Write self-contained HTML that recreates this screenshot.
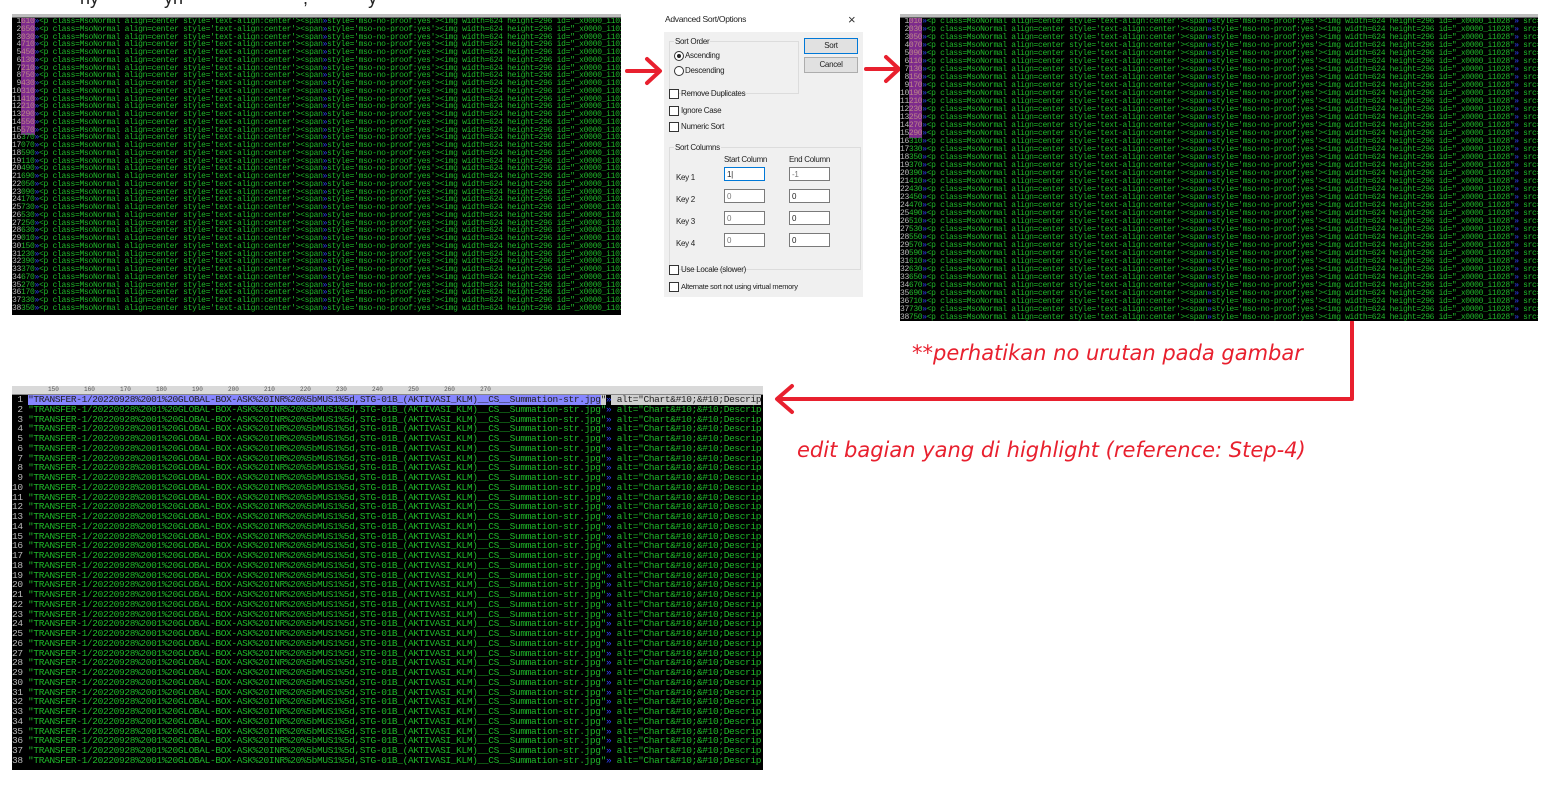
<!DOCTYPE html>
<html><head><meta charset="utf-8"><style>
body{margin:0;width:1562px;height:790px;background:#fff;position:relative;overflow:hidden;font-family:"Liberation Sans",sans-serif}
.p{position:absolute;background:#000;overflow:hidden;font-family:"Liberation Mono",monospace;white-space:pre;color:#1fb82a}
.p .r{height:3px;background:#bdbdbd;border-bottom:1px solid #666}
.p div.l{overflow:hidden}
.n{color:#bbb}
.h{background:#7d2a8c;color:#b88}
.bl{color:#3344ff}
#A{left:12px;top:14px;width:609px;height:301px;font-size:8px;line-height:7.75px;letter-spacing:-0.3px}
#B{left:900px;top:14px;width:638px;height:307px;font-size:8px;line-height:8px;letter-spacing:-0.35px}
#C{left:12px;top:386px;width:751px;height:384px;font-size:9.5px;line-height:9.75px;letter-spacing:-0.35px}
#C .r{height:8px;background:#d9d9d9;border-bottom:1px solid #888;font-size:6px;line-height:8px;color:#555;letter-spacing:0}
.hl{background:#8585ff;color:#222}
.dlg{position:absolute;left:664px;top:10px;width:199px;height:287px;background:#f0f0f0;font-size:8px;color:#222;letter-spacing:-0.3px}
.dlg .t{position:absolute;left:0;top:0;width:199px;height:22px;background:#fff}
.dlg div{position:absolute}
.box{border:1px solid #dcdcdc}
.cb{width:8px;height:8px;border:1px solid #333;background:#fff}
.in{width:41px;height:14px;border:1px solid #7a7a7a;background:#fff;font-size:8px;line-height:14px;padding-left:2px;box-sizing:border-box;color:#777}
.btn{width:52px;height:14px;border:1px solid #adadad;background:#e1e1e1;text-align:center;line-height:14px}
.hw{position:absolute;color:#e8202e;font-family:"DejaVu Sans",sans-serif;font-weight:300;font-style:italic}
</style></head><body>
<div style="position:absolute;left:80px;top:-12px;font-size:18px;color:#222;white-space:pre">ny             yn                        ,            y</div>

<div class="p" id="A"><div class="r"></div><div class="l"> <span class="n">1</span><span class="h">610</span><span class="bl">»</span>&lt;p class=MsoNormal align=center style='text-align:center'&gt;&lt;span<span class="bl">»</span>style='mso-no-proof:yes'&gt;&lt;img width=624 height=296 id="_x0000_i1028"<span class="bl">»</span> sr
 <span class="n">2</span><span class="h">650</span><span class="bl">»</span>&lt;p class=MsoNormal align=center style='text-align:center'&gt;&lt;span<span class="bl">»</span>style='mso-no-proof:yes'&gt;&lt;img width=624 height=296 id="_x0000_i1028"<span class="bl">»</span> sr
 <span class="n">3</span><span class="h">030</span><span class="bl">»</span>&lt;p class=MsoNormal align=center style='text-align:center'&gt;&lt;span<span class="bl">»</span>style='mso-no-proof:yes'&gt;&lt;img width=624 height=296 id="_x0000_i1028"<span class="bl">»</span> sr
 <span class="n">4</span><span class="h">710</span><span class="bl">»</span>&lt;p class=MsoNormal align=center style='text-align:center'&gt;&lt;span<span class="bl">»</span>style='mso-no-proof:yes'&gt;&lt;img width=624 height=296 id="_x0000_i1028"<span class="bl">»</span> sr
 <span class="n">5</span><span class="h">450</span><span class="bl">»</span>&lt;p class=MsoNormal align=center style='text-align:center'&gt;&lt;span<span class="bl">»</span>style='mso-no-proof:yes'&gt;&lt;img width=624 height=296 id="_x0000_i1028"<span class="bl">»</span> sr
 <span class="n">6</span><span class="h">130</span><span class="bl">»</span>&lt;p class=MsoNormal align=center style='text-align:center'&gt;&lt;span<span class="bl">»</span>style='mso-no-proof:yes'&gt;&lt;img width=624 height=296 id="_x0000_i1028"<span class="bl">»</span> sr
 <span class="n">7</span><span class="h">210</span><span class="bl">»</span>&lt;p class=MsoNormal align=center style='text-align:center'&gt;&lt;span<span class="bl">»</span>style='mso-no-proof:yes'&gt;&lt;img width=624 height=296 id="_x0000_i1028"<span class="bl">»</span> sr
 <span class="n">8</span><span class="h">750</span><span class="bl">»</span>&lt;p class=MsoNormal align=center style='text-align:center'&gt;&lt;span<span class="bl">»</span>style='mso-no-proof:yes'&gt;&lt;img width=624 height=296 id="_x0000_i1028"<span class="bl">»</span> sr
 <span class="n">9</span><span class="h">430</span><span class="bl">»</span>&lt;p class=MsoNormal align=center style='text-align:center'&gt;&lt;span<span class="bl">»</span>style='mso-no-proof:yes'&gt;&lt;img width=624 height=296 id="_x0000_i1028"<span class="bl">»</span> sr
<span class="n">10</span><span class="h">310</span><span class="bl">»</span>&lt;p class=MsoNormal align=center style='text-align:center'&gt;&lt;span<span class="bl">»</span>style='mso-no-proof:yes'&gt;&lt;img width=624 height=296 id="_x0000_i1028"<span class="bl">»</span> sr
<span class="n">11</span><span class="h">410</span><span class="bl">»</span>&lt;p class=MsoNormal align=center style='text-align:center'&gt;&lt;span<span class="bl">»</span>style='mso-no-proof:yes'&gt;&lt;img width=624 height=296 id="_x0000_i1028"<span class="bl">»</span> sr
<span class="n">12</span><span class="h">210</span><span class="bl">»</span>&lt;p class=MsoNormal align=center style='text-align:center'&gt;&lt;span<span class="bl">»</span>style='mso-no-proof:yes'&gt;&lt;img width=624 height=296 id="_x0000_i1028"<span class="bl">»</span> sr
<span class="n">13</span><span class="h">290</span><span class="bl">»</span>&lt;p class=MsoNormal align=center style='text-align:center'&gt;&lt;span<span class="bl">»</span>style='mso-no-proof:yes'&gt;&lt;img width=624 height=296 id="_x0000_i1028"<span class="bl">»</span> sr
<span class="n">14</span><span class="h">550</span><span class="bl">»</span>&lt;p class=MsoNormal align=center style='text-align:center'&gt;&lt;span<span class="bl">»</span>style='mso-no-proof:yes'&gt;&lt;img width=624 height=296 id="_x0000_i1028"<span class="bl">»</span> sr
<span class="n">15</span><span class="h">570</span><span class="bl">»</span>&lt;p class=MsoNormal align=center style='text-align:center'&gt;&lt;span<span class="bl">»</span>style='mso-no-proof:yes'&gt;&lt;img width=624 height=296 id="_x0000_i1028"<span class="bl">»</span> sr
<span class="n">16</span>370<span class="bl">»</span>&lt;p class=MsoNormal align=center style='text-align:center'&gt;&lt;span<span class="bl">»</span>style='mso-no-proof:yes'&gt;&lt;img width=624 height=296 id="_x0000_i1028"<span class="bl">»</span> sr
<span class="n">17</span>070<span class="bl">»</span>&lt;p class=MsoNormal align=center style='text-align:center'&gt;&lt;span<span class="bl">»</span>style='mso-no-proof:yes'&gt;&lt;img width=624 height=296 id="_x0000_i1028"<span class="bl">»</span> sr
<span class="n">18</span>590<span class="bl">»</span>&lt;p class=MsoNormal align=center style='text-align:center'&gt;&lt;span<span class="bl">»</span>style='mso-no-proof:yes'&gt;&lt;img width=624 height=296 id="_x0000_i1028"<span class="bl">»</span> sr
<span class="n">19</span>110<span class="bl">»</span>&lt;p class=MsoNormal align=center style='text-align:center'&gt;&lt;span<span class="bl">»</span>style='mso-no-proof:yes'&gt;&lt;img width=624 height=296 id="_x0000_i1028"<span class="bl">»</span> sr
<span class="n">20</span>490<span class="bl">»</span>&lt;p class=MsoNormal align=center style='text-align:center'&gt;&lt;span<span class="bl">»</span>style='mso-no-proof:yes'&gt;&lt;img width=624 height=296 id="_x0000_i1028"<span class="bl">»</span> sr
<span class="n">21</span>690<span class="bl">»</span>&lt;p class=MsoNormal align=center style='text-align:center'&gt;&lt;span<span class="bl">»</span>style='mso-no-proof:yes'&gt;&lt;img width=624 height=296 id="_x0000_i1028"<span class="bl">»</span> sr
<span class="n">22</span>050<span class="bl">»</span>&lt;p class=MsoNormal align=center style='text-align:center'&gt;&lt;span<span class="bl">»</span>style='mso-no-proof:yes'&gt;&lt;img width=624 height=296 id="_x0000_i1028"<span class="bl">»</span> sr
<span class="n">23</span>090<span class="bl">»</span>&lt;p class=MsoNormal align=center style='text-align:center'&gt;&lt;span<span class="bl">»</span>style='mso-no-proof:yes'&gt;&lt;img width=624 height=296 id="_x0000_i1028"<span class="bl">»</span> sr
<span class="n">24</span>170<span class="bl">»</span>&lt;p class=MsoNormal align=center style='text-align:center'&gt;&lt;span<span class="bl">»</span>style='mso-no-proof:yes'&gt;&lt;img width=624 height=296 id="_x0000_i1028"<span class="bl">»</span> sr
<span class="n">25</span>730<span class="bl">»</span>&lt;p class=MsoNormal align=center style='text-align:center'&gt;&lt;span<span class="bl">»</span>style='mso-no-proof:yes'&gt;&lt;img width=624 height=296 id="_x0000_i1028"<span class="bl">»</span> sr
<span class="n">26</span>530<span class="bl">»</span>&lt;p class=MsoNormal align=center style='text-align:center'&gt;&lt;span<span class="bl">»</span>style='mso-no-proof:yes'&gt;&lt;img width=624 height=296 id="_x0000_i1028"<span class="bl">»</span> sr
<span class="n">27</span>250<span class="bl">»</span>&lt;p class=MsoNormal align=center style='text-align:center'&gt;&lt;span<span class="bl">»</span>style='mso-no-proof:yes'&gt;&lt;img width=624 height=296 id="_x0000_i1028"<span class="bl">»</span> sr
<span class="n">28</span>630<span class="bl">»</span>&lt;p class=MsoNormal align=center style='text-align:center'&gt;&lt;span<span class="bl">»</span>style='mso-no-proof:yes'&gt;&lt;img width=624 height=296 id="_x0000_i1028"<span class="bl">»</span> sr
<span class="n">29</span>010<span class="bl">»</span>&lt;p class=MsoNormal align=center style='text-align:center'&gt;&lt;span<span class="bl">»</span>style='mso-no-proof:yes'&gt;&lt;img width=624 height=296 id="_x0000_i1028"<span class="bl">»</span> sr
<span class="n">30</span>150<span class="bl">»</span>&lt;p class=MsoNormal align=center style='text-align:center'&gt;&lt;span<span class="bl">»</span>style='mso-no-proof:yes'&gt;&lt;img width=624 height=296 id="_x0000_i1028"<span class="bl">»</span> sr
<span class="n">31</span>230<span class="bl">»</span>&lt;p class=MsoNormal align=center style='text-align:center'&gt;&lt;span<span class="bl">»</span>style='mso-no-proof:yes'&gt;&lt;img width=624 height=296 id="_x0000_i1028"<span class="bl">»</span> sr
<span class="n">32</span>390<span class="bl">»</span>&lt;p class=MsoNormal align=center style='text-align:center'&gt;&lt;span<span class="bl">»</span>style='mso-no-proof:yes'&gt;&lt;img width=624 height=296 id="_x0000_i1028"<span class="bl">»</span> sr
<span class="n">33</span>370<span class="bl">»</span>&lt;p class=MsoNormal align=center style='text-align:center'&gt;&lt;span<span class="bl">»</span>style='mso-no-proof:yes'&gt;&lt;img width=624 height=296 id="_x0000_i1028"<span class="bl">»</span> sr
<span class="n">34</span>670<span class="bl">»</span>&lt;p class=MsoNormal align=center style='text-align:center'&gt;&lt;span<span class="bl">»</span>style='mso-no-proof:yes'&gt;&lt;img width=624 height=296 id="_x0000_i1028"<span class="bl">»</span> sr
<span class="n">35</span>270<span class="bl">»</span>&lt;p class=MsoNormal align=center style='text-align:center'&gt;&lt;span<span class="bl">»</span>style='mso-no-proof:yes'&gt;&lt;img width=624 height=296 id="_x0000_i1028"<span class="bl">»</span> sr
<span class="n">36</span>170<span class="bl">»</span>&lt;p class=MsoNormal align=center style='text-align:center'&gt;&lt;span<span class="bl">»</span>style='mso-no-proof:yes'&gt;&lt;img width=624 height=296 id="_x0000_i1028"<span class="bl">»</span> sr
<span class="n">37</span>330<span class="bl">»</span>&lt;p class=MsoNormal align=center style='text-align:center'&gt;&lt;span<span class="bl">»</span>style='mso-no-proof:yes'&gt;&lt;img width=624 height=296 id="_x0000_i1028"<span class="bl">»</span> sr
<span class="n">38</span>350<span class="bl">»</span>&lt;p class=MsoNormal align=center style='text-align:center'&gt;&lt;span<span class="bl">»</span>style='mso-no-proof:yes'&gt;&lt;img width=624 height=296 id="_x0000_i1028"<span class="bl">»</span> sr</div></div>

<svg style="position:absolute;left:0;top:0" width="1562" height="790">
<g stroke="#e8202e" stroke-width="4" fill="none" stroke-linecap="round" stroke-linejoin="round">
<path d="M627 71H659M647 59L660 71L647 83"/>
<path d="M866 69H898M886 57L899 69L886 81"/>
<path d="M1352 322V399H778M792 386L777 399L792 412"/>
</g></svg>

<div class="dlg">
<div class="t"></div>
<div style="left:1px;top:4px;font-size:8.5px">Advanced Sort/Options</div>
<div style="left:184px;top:2px;font-size:13px;color:#333">×</div>
<div class="box" style="left:5px;top:31px;width:128px;height:51px"></div>
<div style="left:10px;top:27px;background:#f0f0f0;padding:0 1px">Sort Order</div>
<div style="left:10px;top:41px;width:8px;height:8px;border:1px solid #333;border-radius:50%;background:#fff"><div style="left:2px;top:2px;width:4px;height:4px;border-radius:50%;background:#222"></div></div>
<div style="left:21px;top:41px">Ascending</div>
<div style="left:10px;top:56px;width:8px;height:8px;border:1px solid #333;border-radius:50%;background:#fff"></div>
<div style="left:21px;top:56px">Descending</div>
<div class="btn" style="left:140px;top:28px;border-color:#0078d7">Sort</div>
<div class="btn" style="left:140px;top:47px">Cancel</div>
<div class="cb" style="left:5px;top:79px"></div><div style="left:17px;top:79px">Remove Duplicates</div>
<div class="cb" style="left:5px;top:96px"></div><div style="left:17px;top:96px">Ignore Case</div>
<div class="cb" style="left:5px;top:112px"></div><div style="left:17px;top:112px">Numeric Sort</div>
<div class="box" style="left:5px;top:137px;width:190px;height:121px"></div>
<div style="left:10px;top:133px;background:#f0f0f0;padding:0 1px">Sort Columns</div>
<div style="left:60px;top:145px">Start Column</div><div style="left:125px;top:145px">End Column</div>
<div style="left:12px;top:163px">Key 1</div><div class="in" style="left:60px;top:157px;border-color:#0078d7;color:#222">1|</div><div class="in" style="left:125px;top:157px">-1</div>
<div style="left:12px;top:185px">Key 2</div><div class="in" style="left:60px;top:179px">0</div><div class="in" style="left:125px;top:179px;color:#222">0</div>
<div style="left:12px;top:207px">Key 3</div><div class="in" style="left:60px;top:201px">0</div><div class="in" style="left:125px;top:201px;color:#222">0</div>
<div style="left:12px;top:229px">Key 4</div><div class="in" style="left:60px;top:223px">0</div><div class="in" style="left:125px;top:223px;color:#222">0</div>
<div class="cb" style="left:5px;top:255px"></div><div style="left:17px;top:255px">Use Locale (slower)</div>
<div class="cb" style="left:5px;top:272px"></div><div style="left:17px;top:272px;font-size:7.5px">Alternate sort not using virtual memory</div>
</div>

<div class="p" id="B"><div class="r"></div><div class="l"> <span class="n">1</span><span class="h">010</span><span class="bl">»</span>&lt;p class=MsoNormal align=center style='text-align:center'&gt;&lt;span<span class="bl">»</span>style='mso-no-proof:yes'&gt;&lt;img width=624 height=296 id="_x0000_i1028"<span class="bl">»</span> src="TR
 <span class="n">2</span><span class="h">030</span><span class="bl">»</span>&lt;p class=MsoNormal align=center style='text-align:center'&gt;&lt;span<span class="bl">»</span>style='mso-no-proof:yes'&gt;&lt;img width=624 height=296 id="_x0000_i1028"<span class="bl">»</span> src="TR
 <span class="n">3</span><span class="h">050</span><span class="bl">»</span>&lt;p class=MsoNormal align=center style='text-align:center'&gt;&lt;span<span class="bl">»</span>style='mso-no-proof:yes'&gt;&lt;img width=624 height=296 id="_x0000_i1028"<span class="bl">»</span> src="TR
 <span class="n">4</span><span class="h">070</span><span class="bl">»</span>&lt;p class=MsoNormal align=center style='text-align:center'&gt;&lt;span<span class="bl">»</span>style='mso-no-proof:yes'&gt;&lt;img width=624 height=296 id="_x0000_i1028"<span class="bl">»</span> src="TR
 <span class="n">5</span><span class="h">090</span><span class="bl">»</span>&lt;p class=MsoNormal align=center style='text-align:center'&gt;&lt;span<span class="bl">»</span>style='mso-no-proof:yes'&gt;&lt;img width=624 height=296 id="_x0000_i1028"<span class="bl">»</span> src="TR
 <span class="n">6</span><span class="h">110</span><span class="bl">»</span>&lt;p class=MsoNormal align=center style='text-align:center'&gt;&lt;span<span class="bl">»</span>style='mso-no-proof:yes'&gt;&lt;img width=624 height=296 id="_x0000_i1028"<span class="bl">»</span> src="TR
 <span class="n">7</span><span class="h">130</span><span class="bl">»</span>&lt;p class=MsoNormal align=center style='text-align:center'&gt;&lt;span<span class="bl">»</span>style='mso-no-proof:yes'&gt;&lt;img width=624 height=296 id="_x0000_i1028"<span class="bl">»</span> src="TR
 <span class="n">8</span><span class="h">150</span><span class="bl">»</span>&lt;p class=MsoNormal align=center style='text-align:center'&gt;&lt;span<span class="bl">»</span>style='mso-no-proof:yes'&gt;&lt;img width=624 height=296 id="_x0000_i1028"<span class="bl">»</span> src="TR
 <span class="n">9</span><span class="h">170</span><span class="bl">»</span>&lt;p class=MsoNormal align=center style='text-align:center'&gt;&lt;span<span class="bl">»</span>style='mso-no-proof:yes'&gt;&lt;img width=624 height=296 id="_x0000_i1028"<span class="bl">»</span> src="TR
<span class="n">10</span><span class="h">190</span><span class="bl">»</span>&lt;p class=MsoNormal align=center style='text-align:center'&gt;&lt;span<span class="bl">»</span>style='mso-no-proof:yes'&gt;&lt;img width=624 height=296 id="_x0000_i1028"<span class="bl">»</span> src="TR
<span class="n">11</span><span class="h">210</span><span class="bl">»</span>&lt;p class=MsoNormal align=center style='text-align:center'&gt;&lt;span<span class="bl">»</span>style='mso-no-proof:yes'&gt;&lt;img width=624 height=296 id="_x0000_i1028"<span class="bl">»</span> src="TR
<span class="n">12</span><span class="h">230</span><span class="bl">»</span>&lt;p class=MsoNormal align=center style='text-align:center'&gt;&lt;span<span class="bl">»</span>style='mso-no-proof:yes'&gt;&lt;img width=624 height=296 id="_x0000_i1028"<span class="bl">»</span> src="TR
<span class="n">13</span><span class="h">250</span><span class="bl">»</span>&lt;p class=MsoNormal align=center style='text-align:center'&gt;&lt;span<span class="bl">»</span>style='mso-no-proof:yes'&gt;&lt;img width=624 height=296 id="_x0000_i1028"<span class="bl">»</span> src="TR
<span class="n">14</span><span class="h">270</span><span class="bl">»</span>&lt;p class=MsoNormal align=center style='text-align:center'&gt;&lt;span<span class="bl">»</span>style='mso-no-proof:yes'&gt;&lt;img width=624 height=296 id="_x0000_i1028"<span class="bl">»</span> src="TR
<span class="n">15</span><span class="h">290</span><span class="bl">»</span>&lt;p class=MsoNormal align=center style='text-align:center'&gt;&lt;span<span class="bl">»</span>style='mso-no-proof:yes'&gt;&lt;img width=624 height=296 id="_x0000_i1028"<span class="bl">»</span> src="TR
<span class="n">16</span>310<span class="bl">»</span>&lt;p class=MsoNormal align=center style='text-align:center'&gt;&lt;span<span class="bl">»</span>style='mso-no-proof:yes'&gt;&lt;img width=624 height=296 id="_x0000_i1028"<span class="bl">»</span> src="TR
<span class="n">17</span>330<span class="bl">»</span>&lt;p class=MsoNormal align=center style='text-align:center'&gt;&lt;span<span class="bl">»</span>style='mso-no-proof:yes'&gt;&lt;img width=624 height=296 id="_x0000_i1028"<span class="bl">»</span> src="TR
<span class="n">18</span>350<span class="bl">»</span>&lt;p class=MsoNormal align=center style='text-align:center'&gt;&lt;span<span class="bl">»</span>style='mso-no-proof:yes'&gt;&lt;img width=624 height=296 id="_x0000_i1028"<span class="bl">»</span> src="TR
<span class="n">19</span>370<span class="bl">»</span>&lt;p class=MsoNormal align=center style='text-align:center'&gt;&lt;span<span class="bl">»</span>style='mso-no-proof:yes'&gt;&lt;img width=624 height=296 id="_x0000_i1028"<span class="bl">»</span> src="TR
<span class="n">20</span>390<span class="bl">»</span>&lt;p class=MsoNormal align=center style='text-align:center'&gt;&lt;span<span class="bl">»</span>style='mso-no-proof:yes'&gt;&lt;img width=624 height=296 id="_x0000_i1028"<span class="bl">»</span> src="TR
<span class="n">21</span>410<span class="bl">»</span>&lt;p class=MsoNormal align=center style='text-align:center'&gt;&lt;span<span class="bl">»</span>style='mso-no-proof:yes'&gt;&lt;img width=624 height=296 id="_x0000_i1028"<span class="bl">»</span> src="TR
<span class="n">22</span>430<span class="bl">»</span>&lt;p class=MsoNormal align=center style='text-align:center'&gt;&lt;span<span class="bl">»</span>style='mso-no-proof:yes'&gt;&lt;img width=624 height=296 id="_x0000_i1028"<span class="bl">»</span> src="TR
<span class="n">23</span>450<span class="bl">»</span>&lt;p class=MsoNormal align=center style='text-align:center'&gt;&lt;span<span class="bl">»</span>style='mso-no-proof:yes'&gt;&lt;img width=624 height=296 id="_x0000_i1028"<span class="bl">»</span> src="TR
<span class="n">24</span>470<span class="bl">»</span>&lt;p class=MsoNormal align=center style='text-align:center'&gt;&lt;span<span class="bl">»</span>style='mso-no-proof:yes'&gt;&lt;img width=624 height=296 id="_x0000_i1028"<span class="bl">»</span> src="TR
<span class="n">25</span>490<span class="bl">»</span>&lt;p class=MsoNormal align=center style='text-align:center'&gt;&lt;span<span class="bl">»</span>style='mso-no-proof:yes'&gt;&lt;img width=624 height=296 id="_x0000_i1028"<span class="bl">»</span> src="TR
<span class="n">26</span>510<span class="bl">»</span>&lt;p class=MsoNormal align=center style='text-align:center'&gt;&lt;span<span class="bl">»</span>style='mso-no-proof:yes'&gt;&lt;img width=624 height=296 id="_x0000_i1028"<span class="bl">»</span> src="TR
<span class="n">27</span>530<span class="bl">»</span>&lt;p class=MsoNormal align=center style='text-align:center'&gt;&lt;span<span class="bl">»</span>style='mso-no-proof:yes'&gt;&lt;img width=624 height=296 id="_x0000_i1028"<span class="bl">»</span> src="TR
<span class="n">28</span>550<span class="bl">»</span>&lt;p class=MsoNormal align=center style='text-align:center'&gt;&lt;span<span class="bl">»</span>style='mso-no-proof:yes'&gt;&lt;img width=624 height=296 id="_x0000_i1028"<span class="bl">»</span> src="TR
<span class="n">29</span>570<span class="bl">»</span>&lt;p class=MsoNormal align=center style='text-align:center'&gt;&lt;span<span class="bl">»</span>style='mso-no-proof:yes'&gt;&lt;img width=624 height=296 id="_x0000_i1028"<span class="bl">»</span> src="TR
<span class="n">30</span>590<span class="bl">»</span>&lt;p class=MsoNormal align=center style='text-align:center'&gt;&lt;span<span class="bl">»</span>style='mso-no-proof:yes'&gt;&lt;img width=624 height=296 id="_x0000_i1028"<span class="bl">»</span> src="TR
<span class="n">31</span>610<span class="bl">»</span>&lt;p class=MsoNormal align=center style='text-align:center'&gt;&lt;span<span class="bl">»</span>style='mso-no-proof:yes'&gt;&lt;img width=624 height=296 id="_x0000_i1028"<span class="bl">»</span> src="TR
<span class="n">32</span>630<span class="bl">»</span>&lt;p class=MsoNormal align=center style='text-align:center'&gt;&lt;span<span class="bl">»</span>style='mso-no-proof:yes'&gt;&lt;img width=624 height=296 id="_x0000_i1028"<span class="bl">»</span> src="TR
<span class="n">33</span>650<span class="bl">»</span>&lt;p class=MsoNormal align=center style='text-align:center'&gt;&lt;span<span class="bl">»</span>style='mso-no-proof:yes'&gt;&lt;img width=624 height=296 id="_x0000_i1028"<span class="bl">»</span> src="TR
<span class="n">34</span>670<span class="bl">»</span>&lt;p class=MsoNormal align=center style='text-align:center'&gt;&lt;span<span class="bl">»</span>style='mso-no-proof:yes'&gt;&lt;img width=624 height=296 id="_x0000_i1028"<span class="bl">»</span> src="TR
<span class="n">35</span>690<span class="bl">»</span>&lt;p class=MsoNormal align=center style='text-align:center'&gt;&lt;span<span class="bl">»</span>style='mso-no-proof:yes'&gt;&lt;img width=624 height=296 id="_x0000_i1028"<span class="bl">»</span> src="TR
<span class="n">36</span>710<span class="bl">»</span>&lt;p class=MsoNormal align=center style='text-align:center'&gt;&lt;span<span class="bl">»</span>style='mso-no-proof:yes'&gt;&lt;img width=624 height=296 id="_x0000_i1028"<span class="bl">»</span> src="TR
<span class="n">37</span>730<span class="bl">»</span>&lt;p class=MsoNormal align=center style='text-align:center'&gt;&lt;span<span class="bl">»</span>style='mso-no-proof:yes'&gt;&lt;img width=624 height=296 id="_x0000_i1028"<span class="bl">»</span> src="TR
<span class="n">38</span>750<span class="bl">»</span>&lt;p class=MsoNormal align=center style='text-align:center'&gt;&lt;span<span class="bl">»</span>style='mso-no-proof:yes'&gt;&lt;img width=624 height=296 id="_x0000_i1028"<span class="bl">»</span> src="TR</div></div>

<div class="hw" style="left:912px;top:341px;font-size:21px">**perhatikan no urutan pada gambar</div>
<div class="hw" style="left:797px;top:438px;font-size:21px">edit bagian yang di highlight (reference: Step-4)</div>

<div class="p" id="C"><div class="r">          150       160       170       180       190       200       210       220       230       240       250       260       270</div><div class="l"> <span class="n">1</span> <span class="hl">"TRANSFER-1/20220928%2001%20GLOBAL-BOX-ASK%20INR%20%5bMUS1%5d,STG-01B_(AKTIVASI_KLM)__CS__Summation-str.jpg</span><span style="background:#cfcfcf;color:#222">"</span><span class="bl">»</span><span style="background:#cfcfcf;color:#222"> alt="Chart&amp;#10;&amp;#10;Descrip</span>
 <span class="n">2</span> "TRANSFER-1/20220928%2001%20GLOBAL-BOX-ASK%20INR%20%5bMUS1%5d,STG-01B_(AKTIVASI_KLM)__CS__Summation-str.jpg"<span class="bl">»</span> alt="Chart&amp;#10;&amp;#10;Descrip
 <span class="n">3</span> "TRANSFER-1/20220928%2001%20GLOBAL-BOX-ASK%20INR%20%5bMUS1%5d,STG-01B_(AKTIVASI_KLM)__CS__Summation-str.jpg"<span class="bl">»</span> alt="Chart&amp;#10;&amp;#10;Descrip
 <span class="n">4</span> "TRANSFER-1/20220928%2001%20GLOBAL-BOX-ASK%20INR%20%5bMUS1%5d,STG-01B_(AKTIVASI_KLM)__CS__Summation-str.jpg"<span class="bl">»</span> alt="Chart&amp;#10;&amp;#10;Descrip
 <span class="n">5</span> "TRANSFER-1/20220928%2001%20GLOBAL-BOX-ASK%20INR%20%5bMUS1%5d,STG-01B_(AKTIVASI_KLM)__CS__Summation-str.jpg"<span class="bl">»</span> alt="Chart&amp;#10;&amp;#10;Descrip
 <span class="n">6</span> "TRANSFER-1/20220928%2001%20GLOBAL-BOX-ASK%20INR%20%5bMUS1%5d,STG-01B_(AKTIVASI_KLM)__CS__Summation-str.jpg"<span class="bl">»</span> alt="Chart&amp;#10;&amp;#10;Descrip
 <span class="n">7</span> "TRANSFER-1/20220928%2001%20GLOBAL-BOX-ASK%20INR%20%5bMUS1%5d,STG-01B_(AKTIVASI_KLM)__CS__Summation-str.jpg"<span class="bl">»</span> alt="Chart&amp;#10;&amp;#10;Descrip
 <span class="n">8</span> "TRANSFER-1/20220928%2001%20GLOBAL-BOX-ASK%20INR%20%5bMUS1%5d,STG-01B_(AKTIVASI_KLM)__CS__Summation-str.jpg"<span class="bl">»</span> alt="Chart&amp;#10;&amp;#10;Descrip
 <span class="n">9</span> "TRANSFER-1/20220928%2001%20GLOBAL-BOX-ASK%20INR%20%5bMUS1%5d,STG-01B_(AKTIVASI_KLM)__CS__Summation-str.jpg"<span class="bl">»</span> alt="Chart&amp;#10;&amp;#10;Descrip
<span class="n">10</span> "TRANSFER-1/20220928%2001%20GLOBAL-BOX-ASK%20INR%20%5bMUS1%5d,STG-01B_(AKTIVASI_KLM)__CS__Summation-str.jpg"<span class="bl">»</span> alt="Chart&amp;#10;&amp;#10;Descrip
<span class="n">11</span> "TRANSFER-1/20220928%2001%20GLOBAL-BOX-ASK%20INR%20%5bMUS1%5d,STG-01B_(AKTIVASI_KLM)__CS__Summation-str.jpg"<span class="bl">»</span> alt="Chart&amp;#10;&amp;#10;Descrip
<span class="n">12</span> "TRANSFER-1/20220928%2001%20GLOBAL-BOX-ASK%20INR%20%5bMUS1%5d,STG-01B_(AKTIVASI_KLM)__CS__Summation-str.jpg"<span class="bl">»</span> alt="Chart&amp;#10;&amp;#10;Descrip
<span class="n">13</span> "TRANSFER-1/20220928%2001%20GLOBAL-BOX-ASK%20INR%20%5bMUS1%5d,STG-01B_(AKTIVASI_KLM)__CS__Summation-str.jpg"<span class="bl">»</span> alt="Chart&amp;#10;&amp;#10;Descrip
<span class="n">14</span> "TRANSFER-1/20220928%2001%20GLOBAL-BOX-ASK%20INR%20%5bMUS1%5d,STG-01B_(AKTIVASI_KLM)__CS__Summation-str.jpg"<span class="bl">»</span> alt="Chart&amp;#10;&amp;#10;Descrip
<span class="n">15</span> "TRANSFER-1/20220928%2001%20GLOBAL-BOX-ASK%20INR%20%5bMUS1%5d,STG-01B_(AKTIVASI_KLM)__CS__Summation-str.jpg"<span class="bl">»</span> alt="Chart&amp;#10;&amp;#10;Descrip
<span class="n">16</span> "TRANSFER-1/20220928%2001%20GLOBAL-BOX-ASK%20INR%20%5bMUS1%5d,STG-01B_(AKTIVASI_KLM)__CS__Summation-str.jpg"<span class="bl">»</span> alt="Chart&amp;#10;&amp;#10;Descrip
<span class="n">17</span> "TRANSFER-1/20220928%2001%20GLOBAL-BOX-ASK%20INR%20%5bMUS1%5d,STG-01B_(AKTIVASI_KLM)__CS__Summation-str.jpg"<span class="bl">»</span> alt="Chart&amp;#10;&amp;#10;Descrip
<span class="n">18</span> "TRANSFER-1/20220928%2001%20GLOBAL-BOX-ASK%20INR%20%5bMUS1%5d,STG-01B_(AKTIVASI_KLM)__CS__Summation-str.jpg"<span class="bl">»</span> alt="Chart&amp;#10;&amp;#10;Descrip
<span class="n">19</span> "TRANSFER-1/20220928%2001%20GLOBAL-BOX-ASK%20INR%20%5bMUS1%5d,STG-01B_(AKTIVASI_KLM)__CS__Summation-str.jpg"<span class="bl">»</span> alt="Chart&amp;#10;&amp;#10;Descrip
<span class="n">20</span> "TRANSFER-1/20220928%2001%20GLOBAL-BOX-ASK%20INR%20%5bMUS1%5d,STG-01B_(AKTIVASI_KLM)__CS__Summation-str.jpg"<span class="bl">»</span> alt="Chart&amp;#10;&amp;#10;Descrip
<span class="n">21</span> "TRANSFER-1/20220928%2001%20GLOBAL-BOX-ASK%20INR%20%5bMUS1%5d,STG-01B_(AKTIVASI_KLM)__CS__Summation-str.jpg"<span class="bl">»</span> alt="Chart&amp;#10;&amp;#10;Descrip
<span class="n">22</span> "TRANSFER-1/20220928%2001%20GLOBAL-BOX-ASK%20INR%20%5bMUS1%5d,STG-01B_(AKTIVASI_KLM)__CS__Summation-str.jpg"<span class="bl">»</span> alt="Chart&amp;#10;&amp;#10;Descrip
<span class="n">23</span> "TRANSFER-1/20220928%2001%20GLOBAL-BOX-ASK%20INR%20%5bMUS1%5d,STG-01B_(AKTIVASI_KLM)__CS__Summation-str.jpg"<span class="bl">»</span> alt="Chart&amp;#10;&amp;#10;Descrip
<span class="n">24</span> "TRANSFER-1/20220928%2001%20GLOBAL-BOX-ASK%20INR%20%5bMUS1%5d,STG-01B_(AKTIVASI_KLM)__CS__Summation-str.jpg"<span class="bl">»</span> alt="Chart&amp;#10;&amp;#10;Descrip
<span class="n">25</span> "TRANSFER-1/20220928%2001%20GLOBAL-BOX-ASK%20INR%20%5bMUS1%5d,STG-01B_(AKTIVASI_KLM)__CS__Summation-str.jpg"<span class="bl">»</span> alt="Chart&amp;#10;&amp;#10;Descrip
<span class="n">26</span> "TRANSFER-1/20220928%2001%20GLOBAL-BOX-ASK%20INR%20%5bMUS1%5d,STG-01B_(AKTIVASI_KLM)__CS__Summation-str.jpg"<span class="bl">»</span> alt="Chart&amp;#10;&amp;#10;Descrip
<span class="n">27</span> "TRANSFER-1/20220928%2001%20GLOBAL-BOX-ASK%20INR%20%5bMUS1%5d,STG-01B_(AKTIVASI_KLM)__CS__Summation-str.jpg"<span class="bl">»</span> alt="Chart&amp;#10;&amp;#10;Descrip
<span class="n">28</span> "TRANSFER-1/20220928%2001%20GLOBAL-BOX-ASK%20INR%20%5bMUS1%5d,STG-01B_(AKTIVASI_KLM)__CS__Summation-str.jpg"<span class="bl">»</span> alt="Chart&amp;#10;&amp;#10;Descrip
<span class="n">29</span> "TRANSFER-1/20220928%2001%20GLOBAL-BOX-ASK%20INR%20%5bMUS1%5d,STG-01B_(AKTIVASI_KLM)__CS__Summation-str.jpg"<span class="bl">»</span> alt="Chart&amp;#10;&amp;#10;Descrip
<span class="n">30</span> "TRANSFER-1/20220928%2001%20GLOBAL-BOX-ASK%20INR%20%5bMUS1%5d,STG-01B_(AKTIVASI_KLM)__CS__Summation-str.jpg"<span class="bl">»</span> alt="Chart&amp;#10;&amp;#10;Descrip
<span class="n">31</span> "TRANSFER-1/20220928%2001%20GLOBAL-BOX-ASK%20INR%20%5bMUS1%5d,STG-01B_(AKTIVASI_KLM)__CS__Summation-str.jpg"<span class="bl">»</span> alt="Chart&amp;#10;&amp;#10;Descrip
<span class="n">32</span> "TRANSFER-1/20220928%2001%20GLOBAL-BOX-ASK%20INR%20%5bMUS1%5d,STG-01B_(AKTIVASI_KLM)__CS__Summation-str.jpg"<span class="bl">»</span> alt="Chart&amp;#10;&amp;#10;Descrip
<span class="n">33</span> "TRANSFER-1/20220928%2001%20GLOBAL-BOX-ASK%20INR%20%5bMUS1%5d,STG-01B_(AKTIVASI_KLM)__CS__Summation-str.jpg"<span class="bl">»</span> alt="Chart&amp;#10;&amp;#10;Descrip
<span class="n">34</span> "TRANSFER-1/20220928%2001%20GLOBAL-BOX-ASK%20INR%20%5bMUS1%5d,STG-01B_(AKTIVASI_KLM)__CS__Summation-str.jpg"<span class="bl">»</span> alt="Chart&amp;#10;&amp;#10;Descrip
<span class="n">35</span> "TRANSFER-1/20220928%2001%20GLOBAL-BOX-ASK%20INR%20%5bMUS1%5d,STG-01B_(AKTIVASI_KLM)__CS__Summation-str.jpg"<span class="bl">»</span> alt="Chart&amp;#10;&amp;#10;Descrip
<span class="n">36</span> "TRANSFER-1/20220928%2001%20GLOBAL-BOX-ASK%20INR%20%5bMUS1%5d,STG-01B_(AKTIVASI_KLM)__CS__Summation-str.jpg"<span class="bl">»</span> alt="Chart&amp;#10;&amp;#10;Descrip
<span class="n">37</span> "TRANSFER-1/20220928%2001%20GLOBAL-BOX-ASK%20INR%20%5bMUS1%5d,STG-01B_(AKTIVASI_KLM)__CS__Summation-str.jpg"<span class="bl">»</span> alt="Chart&amp;#10;&amp;#10;Descrip
<span class="n">38</span> "TRANSFER-1/20220928%2001%20GLOBAL-BOX-ASK%20INR%20%5bMUS1%5d,STG-01B_(AKTIVASI_KLM)__CS__Summation-str.jpg"<span class="bl">»</span> alt="Chart&amp;#10;&amp;#10;Descrip</div></div>
</body></html>
